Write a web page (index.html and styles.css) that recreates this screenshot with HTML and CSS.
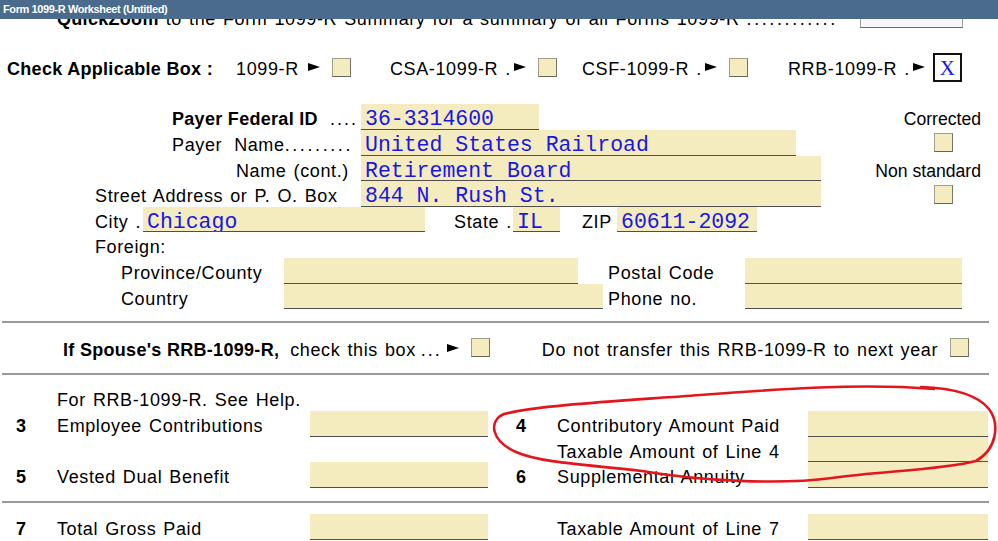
FILE: index.html
```html
<!DOCTYPE html>
<html lang="en">
<head>
  <meta charset="utf-8">
  <title>Form 1099-R Worksheet</title>
  <link rel="stylesheet" href="styles.css">
</head>
<body>
  <div class="titlebar">Form 1099-R Worksheet (Untitled)</div>

  <div class="sheet">
    <div class="form">
      <!-- QuickZoom line, partly scrolled under the title bar -->
      <div class="row quickzoom">
        <span class="lbl"><b>QuickZoom</b> to the Form 1099-R Summary for a summary of all Forms 1099-R <span class="dots">............</span></span>
        <span class="qz-btn"></span>
      </div>

      <div class="check-row">
        <span class="check-title">Check Applicable Box :</span>
        <span class="check-group g-plain">1099-R<i class="arrow"></i><span class="cbox"></span></span>
        <span class="check-group">CSA-1099-R .<i class="arrow"></i><span class="cbox"></span></span>
        <span class="check-group">CSF-1099-R .<i class="arrow"></i><span class="cbox"></span></span>
        <span class="check-group g-rrb">RRB-1099-R .<i class="arrow"></i><span class="xbox">X</span></span>
      </div>

      <!-- Payer -->
      <div class="payer">
        <div class="payer-top">
          <div class="payer-main">
            <div class="row">
              <span class="lbl lbl-main lbl-payer"><b>Payer Federal ID</b><span class="dots dots-wide">....</span></span>
              <span class="field f-fedid">36-3314600</span>
            </div>
            <div class="row">
              <span class="lbl lbl-main lbl-payer"><span class="word-payer">Payer</span>Name<span class="dots">.........</span></span>
              <span class="field f-name">United States Railroad</span>
            </div>
            <div class="row">
              <span class="lbl lbl-main lbl-cont">Name (cont.)</span>
              <span class="field f-wide">Retirement Board</span>
            </div>
            <div class="row">
              <span class="lbl lbl-main">Street Address or P. O. Box</span>
              <span class="field f-wide">844 N. Rush St.</span>
            </div>
          </div>

          <div class="flags">
            <div class="row flag-row"><span class="lbl">Corrected</span></div>
            <div class="row flag-row"><span class="cbox"></span></div>
            <div class="row flag-row"><span class="lbl">Non standard</span></div>
            <div class="row flag-row"><span class="cbox"></span></div>
          </div>
        </div>

        <div class="row">
          <span class="lbl city-lbl">City .</span>
          <span class="field f-city">Chicago</span>
          <span class="lbl state-lbl">State .</span>
          <span class="field f-state">IL</span>
          <span class="lbl zip-lbl">ZIP</span>
          <span class="field f-zip">60611-2092</span>
        </div>
        <div class="row">
          <span class="lbl">Foreign:</span>
        </div>

        <div class="foreign">
          <span class="lbl foreign-lbl">Province/County</span>
          <span class="field f-province"></span>
          <span class="lbl">Postal Code</span>
          <span class="field"></span>

          <span class="lbl foreign-lbl">Country</span>
          <span class="field f-country"></span>
          <span class="lbl">Phone no.</span>
          <span class="field"></span>
        </div>
      </div>

      <div class="rule rule-top"></div>

      <div class="row spouse">
        <span class="lbl"><b>If Spouse's RRB-1099-R,</b></span>
        <span class="lbl sp-check">check this box<span class="dots">...</span></span>
        <i class="arrow"></i>
        <span class="cbox"></span>
        <span class="lbl sp-transfer">Do not transfer this RRB-1099-R to next year</span>
        <span class="cbox"></span>
      </div>

      <div class="rule rule-mid"></div>

      <!-- Boxes 3 - 6 -->
      <div class="amounts amounts-top">
        <span class="lbl span-rest">For RRB-1099-R. See Help.</span>

        <span class="num">3</span>
        <span class="lbl">Employee Contributions</span>
        <span class="field"></span>
        <span class="num num-r">4</span>
        <span class="lbl">Contributory Amount Paid</span>
        <span class="field"></span>

        <span class="lbl col-5">Taxable Amount of Line 4</span>
        <span class="field"></span>

        <span class="num">5</span>
        <span class="lbl">Vested Dual Benefit</span>
        <span class="field"></span>
        <span class="num num-r">6</span>
        <span class="lbl">Supplemental Annuity</span>
        <span class="field"></span>
      </div>

      <div class="rule rule-low"></div>

      <div class="amounts amounts-bottom">
        <span class="num">7</span>
        <span class="lbl">Total Gross Paid</span>
        <span class="field"></span>
        <span class="lbl col-5">Taxable Amount of Line 7</span>
        <span class="field"></span>
      </div>
    </div>
  </div>

  <!-- hand-drawn red markup over the form -->
  <svg class="markup" viewBox="0 0 998 541" width="998" height="541">
    <path d="M 921 387 C 950 388, 977 394, 989 409 C 1000 424, 997 449, 976 461 C 942 470, 882 471, 832 478 C 780 485, 700 481, 642 471 C 592 465, 540 463, 516 452 C 491 441, 488 421, 504 414 C 540 405, 620 401, 700 395 C 780 389, 860 383, 934 389" />
  </svg>
</body>
</html>
```

FILE: styles.css
```css
html {
  background: #fff;
}

body {
  margin: 0;
  width: 998px;
  height: 541px;
  overflow: hidden;
  position: relative;
  font-family: 'Liberation Sans', Arial, sans-serif;
  font-size: 18px;
  letter-spacing: 0.62px;
  word-spacing: 1.4px;
  color: #000;
}

b {
  letter-spacing: 0.3px;
  word-spacing: 0;
}

.titlebar {
  height: 19px;
  padding-left: 3px;
  background: #4a6b8c;
  color: #fff;
  font-family: 'Liberation Sans', sans-serif;
  font-weight: bold;
  font-size: 11px;
  letter-spacing: -0.4px;
  word-spacing: 0;
  line-height: 19px;
}

.sheet {
  height: 522px;
  overflow: hidden;
}

/* the form is scrolled a little, the first line sits under the title */
.form {
  margin-top: -15.5px;
}

.row {
  display: flex;
  align-items: flex-start;
  height: 25.6px;
  white-space: nowrap;
}

.lbl {
  flex: none;
  line-height: 30.4px;
  white-space: nowrap;
}

.row > .cbox,
.row > .arrow {
  align-self: center;
}

.dots {
  letter-spacing: 2.6px;
}

.dots-wide {
  margin-left: 12px;
  letter-spacing: 2px;
}

.field {
  display: block;
  flex: none;
  height: 25.6px;
  box-sizing: border-box;
  padding: 7px 0 0 4px;
  line-height: 17.6px;
  background: #f4ecbe;
  border-bottom: 1px solid #4f4f4f;
  font-family: 'Liberation Mono', 'Courier New', monospace;
  font-size: 21.5px;
  letter-spacing: 0;
  word-spacing: 0;
  color: #1717e6;
  white-space: pre;
  overflow: hidden;
}

.cbox {
  display: block;
  flex: none;
  width: 19px;
  height: 19px;
  box-sizing: border-box;
  background: #f4ecbe;
  border: 1px solid;
  border-color: #a09e8c #77756a #66645a #a09e8c;
}

.arrow {
  display: block;
  flex: none;
  width: 0;
  height: 0;
  border-left: 12px solid #000;
  border-top: 4.5px solid transparent;
  border-bottom: 4.5px solid transparent;
}

/* QuickZoom */
.quickzoom {
  padding-left: 57px;
}

.qz-btn {
  display: block;
  width: 103px;
  height: 23px;
  margin: 1.5px 35px 0 auto;
  box-sizing: border-box;
  background: #f7f7f7;
  border: 1px solid #a0a0a0;
  border-bottom-color: #6a6a6a;
}

/* Check applicable box */
.check-row {
  display: grid;
  grid-template-columns: 229px 154px 192px 206px auto;
  align-items: center;
  height: 30px;
  margin: 23.65px 0 21.75px 7px;
  line-height: 30px;
  white-space: nowrap;
}

.check-title {
  font-weight: bold;
  letter-spacing: 0.3px;
  word-spacing: 0;
}

.check-group {
  display: flex;
  align-items: center;
}

.check-group .arrow {
  margin: 0 12px 3.5px 3px;
}

.g-plain .arrow {
  margin-left: 9px;
}

.check-group .cbox {
  margin-bottom: 3.5px;
}

.g-rrb .arrow {
  margin-right: 8px;
}

.xbox {
  display: block;
  width: 29px;
  height: 29px;
  margin-bottom: 3.5px;
  box-sizing: border-box;
  border: 2px solid #111;
  background: #fff;
  color: #1717e6;
  font-family: 'Liberation Serif', 'Times New Roman', serif;
  font-size: 21px;
  letter-spacing: 0;
  line-height: 27px;
  text-align: center;
}

/* Payer block */
.payer {
  margin-left: 95px;
}

.payer-top {
  display: flex;
}

.payer-main {
  width: 726px;
}

.lbl-main {
  width: 266px;
}

.lbl-payer {
  box-sizing: border-box;
  padding-left: 77px;
}

.word-payer {
  margin-right: 12px;
}

.lbl-cont {
  box-sizing: border-box;
  padding-left: 141px;
}

.f-fedid { width: 178px; }
.f-name { width: 435px; }
.f-wide { width: 460px; }

.flags {
  width: 110px;
  margin: 0 17px 0 auto;
  font-size: 17.6px;
  letter-spacing: 0;
  word-spacing: 0;
}

.flag-row {
  justify-content: flex-end;
}

.flag-row .cbox {
  margin-right: 28px;
}

.city-lbl { width: 48px; }
.f-city { width: 282px; }
.state-lbl { width: 59px; margin-left: 29px; }
.f-state { width: 47px; }
.zip-lbl { width: 35px; margin-left: 22px; }
.f-zip { width: 140px; }

.foreign {
  display: grid;
  grid-template-columns: 189px 324px 137px 217px;
  grid-auto-rows: 25.6px;
  align-items: start;
}

.foreign-lbl {
  padding-left: 26px;
}

.f-province { width: 294px; }
.f-country { width: 319px; }

/* separators */
.rule {
  height: 2px;
  margin-left: 2px;
  width: 987px;
  background: #999;
}

.rule-top { margin-top: 11.7px; }
.rule-mid { margin-top: 12.2px; }
.rule-low { margin-top: 13px; }

.spouse {
  margin-top: 12.2px;
  padding-left: 63px;
}

.sp-check {
  margin-left: 11px;
}

.sp-check .dots {
  margin-left: 5px;
  letter-spacing: 2px;
}

.spouse .arrow {
  margin: 0 12px 0 5px;
}

.sp-transfer {
  margin: 0 12px 0 52px;
}

/* amount boxes */
.amounts {
  display: grid;
  grid-template-columns: 57px 253px 178px 69px 251px 180px;
  grid-auto-rows: 25.6px;
  align-items: start;
}

.amounts-top { margin-top: 10.5px; }
.amounts-bottom { margin-top: 11.5px; }

.amounts .field {
  width: 100%;
}

.num {
  padding-left: 16px;
  font-weight: bold;
  line-height: 30.4px;
}

.num-r {
  padding-left: 28px;
}

.span-rest {
  grid-column: 2 / span 5;
}

.col-5 {
  grid-column: 5;
}

.markup {
  position: absolute;
  top: 0;
  left: 0;
  pointer-events: none;
}

.markup path {
  fill: none;
  stroke: #e3161d;
  stroke-width: 2.6;
  stroke-linecap: round;
  stroke-linejoin: round;
}
```
